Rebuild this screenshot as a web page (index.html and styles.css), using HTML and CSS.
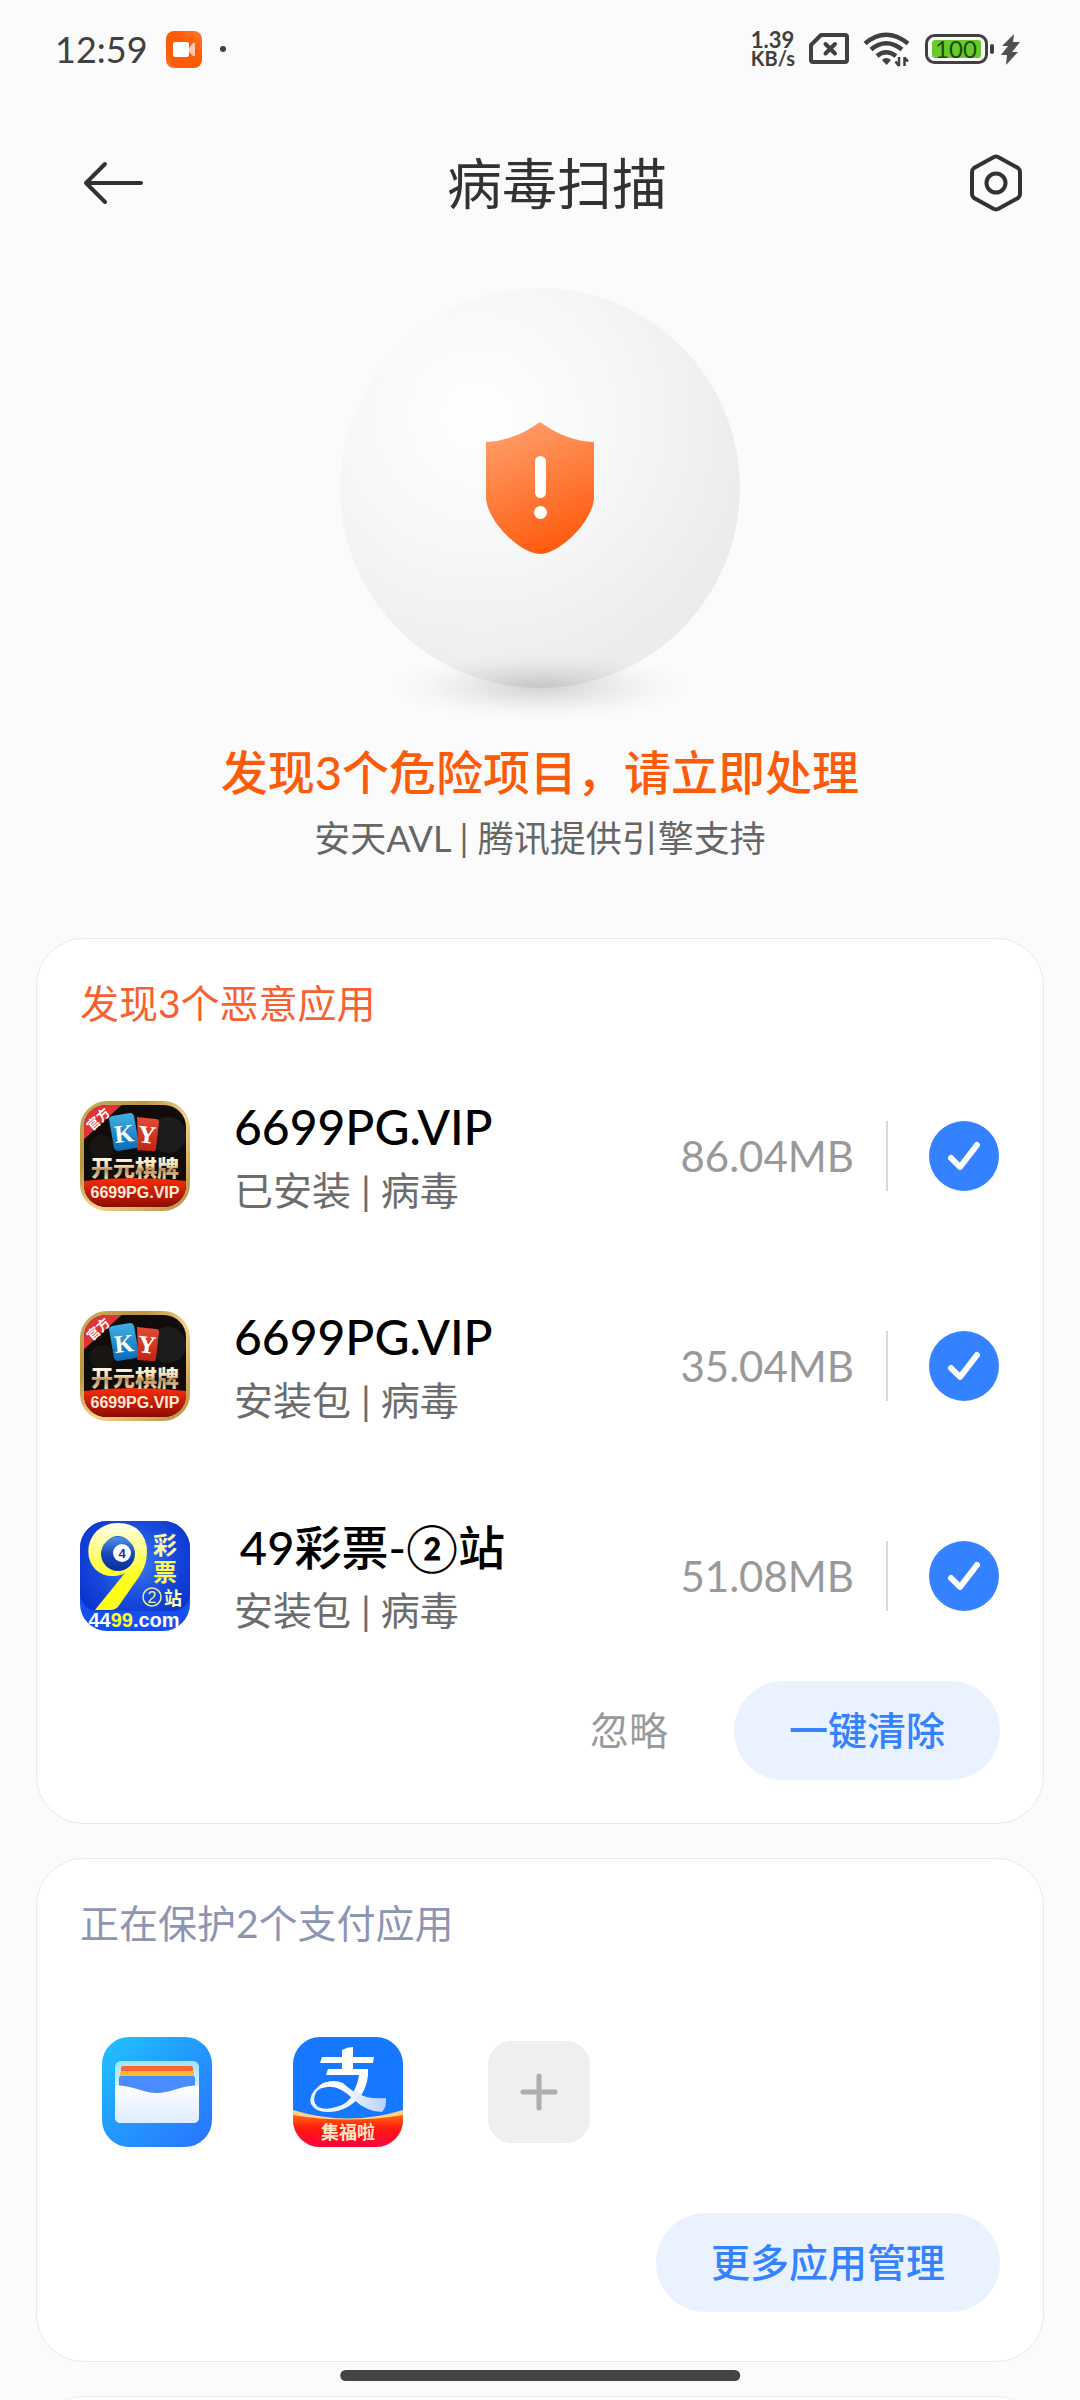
FILE: index.html
```html
<!DOCTYPE html>
<html lang="zh-CN">
<head>
<meta charset="utf-8">
<meta name="viewport" content="width=device-width, initial-scale=1">
<title>病毒扫描</title>
<link rel="stylesheet" href="styles.css">
</head>
<body>
<svg class="defs" width="0" height="0" aria-hidden="true">
  <defs>
    <linearGradient id="gold" x1="0" y1="0" x2="1" y2="1">
      <stop offset="0" stop-color="#c9ac5e"/><stop offset=".3" stop-color="#bd9440"/><stop offset=".55" stop-color="#f3d488"/><stop offset="1" stop-color="#b88a3c"/>
    </linearGradient>
    <linearGradient id="ky-red" x1="0" y1="0" x2="0" y2="1">
      <stop offset="0" stop-color="#fb2c08"/><stop offset="1" stop-color="#8d0d02"/>
    </linearGradient>
    <linearGradient id="ky-blue" x1="0" y1="0" x2="0" y2="1">
      <stop offset="0" stop-color="#3fb0e4"/><stop offset="1" stop-color="#0a6bb8"/>
    </linearGradient>
    <linearGradient id="ky-card" x1="0" y1="0" x2="0" y2="1">
      <stop offset="0" stop-color="#e34a35"/><stop offset="1" stop-color="#c52413"/>
    </linearGradient>
    <linearGradient id="ky-text" x1="0" y1="0" x2="0" y2="1">
      <stop offset=".2" stop-color="#fffdf2"/><stop offset=".5" stop-color="#f2dba6"/><stop offset=".6" stop-color="#b88c55"/><stop offset="1" stop-color="#fff0c8"/>
    </linearGradient>
    <clipPath id="app-clip"><rect width="110" height="110" rx="27"/></clipPath>
    <clipPath id="ky-clip"><rect x="4" y="4" width="102" height="102" rx="22"/></clipPath>
    <symbol id="app-ky" viewBox="0 0 110 110">
      <rect width="110" height="110" rx="27" fill="url(#gold)"/>
      <g clip-path="url(#ky-clip)">
        <rect x="4" y="4" width="102" height="102" fill="#100c0a"/>
        <circle cx="22" cy="46" r="12" fill="#1a1512"/>
        <circle cx="88" cy="34" r="18" fill="#1d1c1c"/>
        <path d="M4 80Q55 74 106 80V106H4z" fill="url(#ky-red)"/>
        <path d="M0 0H46L0 42z" fill="#df3437"/>
        <path d="M32 15L50 12Q53 12 54 15L59 43Q59 46 56 47L38 50Q35 50 34 47L29 18Q29 16 32 15z" fill="url(#ky-blue)"/>
        <path d="M57 16L76 18Q79 18 79 21L76 47Q76 51 72 50L57 49L58 43z" fill="url(#ky-card)"/>
      </g>
      <text class="ky-serif" x="44" y="41" text-anchor="middle" transform="rotate(-6 44 32)">K</text>
      <text class="ky-serif" x="67" y="42" text-anchor="middle" transform="rotate(6 67 32)">Y</text>
      <text class="ky-corner" x="0" y="5" text-anchor="middle" transform="translate(18 18) rotate(-43)">官方</text>
      <text class="ky-name" x="11" y="75" fill="url(#ky-text)">开元棋牌</text>
      <text class="ky-site" x="55" y="97" text-anchor="middle">6699PG.VIP</text>
    </symbol>
  </defs>
</svg>

<div class="screen">
  <header class="status">
    <time class="clock">12:59</time>
    <svg class="rec" width="36" height="37" viewBox="0 0 36 37" aria-hidden="true">
      <defs><linearGradient id="rec" x1="1" y1="0" x2="0" y2="1"><stop offset="0" stop-color="#ff7a33"/><stop offset=".4" stop-color="#ff5a00"/><stop offset=".8" stop-color="#ff5d0a"/><stop offset="1" stop-color="#ff7a3a"/></linearGradient></defs>
      <rect width="36" height="37" rx="8" fill="url(#rec)"/>
      <rect x="7" y="11" width="16" height="15" rx="2" fill="#fff"/>
      <path d="M23 17L27 12H29V25H27L23 21z" fill="#ffc9ad"/>
    </svg>
    <span class="dot"></span>
    <div class="status-right">
      <div class="speed"><span class="rate">1.39</span><span class="unit">KB/s</span></div>
      <svg width="40" height="32" viewBox="0 0 40 32" aria-hidden="true"><path d="M12 2H36Q38 2 38 4V27Q38 29 36 29H4Q2 29 2 27V12z" fill="none" stroke="#404040" stroke-width="4" stroke-linejoin="round"/><path d="M16.500 11L26 20.500M26 11L16.500 20.500" stroke="#404040" stroke-width="4" stroke-linecap="round"/></svg>
      <svg width="48" height="36" viewBox="0 0 48 36" aria-hidden="true">
        <g fill="none" stroke="#404040" stroke-width="4.500"><path d="M2 12.500Q23 -5 45 12.500"/><path d="M8 18.500Q23 6 39 18.500"/><path d="M14 25Q23 17.500 33 25"/></g>
        <path d="M19 29Q23 25 28 29L24 33.500Q23.500 34 23 33.500z" fill="#404040"/>
        <path d="M36 26V35M36 35L32.500 30.500M41.500 35V26M41.500 26.500L45 30.500" stroke="#404040" stroke-width="2.500" fill="none"/>
      </svg>
      <div class="power">
        <svg width="70" height="32" viewBox="0 0 70 32" aria-hidden="true">
          <rect x="1.500" y="2.500" width="60" height="27" rx="8" fill="none" stroke="#404040" stroke-width="3"/>
          <rect x="7" y="7" width="49" height="18" rx="3" fill="#68cb29"/>
          <rect x="65" y="11" width="4" height="10" rx="2" fill="#404040"/>
          <text class="battery" x="31" y="25" text-anchor="middle">100</text>
        </svg>
        <svg width="19" height="31" viewBox="0 0 19 31" aria-hidden="true"><path d="M13 0L1 12H7L0 21H6L5 31L17 18H11L19 8H12z" fill="#505050"/></svg>
      </div>
    </div>
  </header>

  <nav class="bar">
    <button class="icon-btn" aria-label="返回"><svg width="62" height="44" viewBox="0 0 62 44"><path d="M22 3L3 22L22 41M3 22H58" fill="none" stroke="#323232" stroke-width="4" stroke-linecap="round" stroke-linejoin="round"/></svg></button>
    <h1 class="title">病毒扫描</h1>
    <button class="icon-btn" aria-label="设置"><svg width="54" height="58" viewBox="0 0 54 58"><path d="M24.500 3.200Q27 2 29.500 3.200L49 14Q51 15.500 51 18V40Q51 42.500 49 44L29.500 54.800Q27 56 24.500 54.800L5 44Q3 42.500 3 40V18Q3 15.500 5 14z" fill="none" stroke="#323232" stroke-width="4"/><circle cx="27" cy="29" r="9.500" fill="none" stroke="#323232" stroke-width="4"/></svg></button>
  </nav>

  <section class="hero">
    <svg class="ball" viewBox="0 0 440 450" width="440" height="450" aria-hidden="true">
      <defs>
        <radialGradient id="ball" gradientUnits="userSpaceOnUse" cx="158" cy="146" r="275"><stop offset="0" stop-color="#fff"/><stop offset=".5" stop-color="#f6f7f7"/><stop offset="1" stop-color="#ebeded"/></radialGradient>
        <radialGradient id="shade" cx=".5" cy=".5" r=".5"><stop offset="0" stop-color="#000" stop-opacity=".16"/><stop offset=".4" stop-color="#000" stop-opacity=".08"/><stop offset=".75" stop-color="#000" stop-opacity=".02"/><stop offset="1" stop-color="#000" stop-opacity="0"/></radialGradient>
        <linearGradient id="shield" x1=".25" y1="0" x2=".6" y2="1"><stop offset="0" stop-color="#ff9e6b"/><stop offset="1" stop-color="#ff5a0c"/></linearGradient>
      </defs>
      <circle cx="220" cy="218" r="200" fill="url(#ball)"/>
      <ellipse cx="220" cy="417" rx="150" ry="33" fill="url(#shade)"/>
      <path d="M220 152Q246 171 274 172V227C274 250 240 284 220 284C200 284 166 250 166 227V172Q194 171 220 152z" fill="url(#shield)"/>
      <rect x="215" y="186" width="11" height="42" rx="5.500" fill="#fff"/><circle cx="220.500" cy="242.500" r="6.500" fill="#fff"/>
    </svg>
    <h2 class="alert">发现3个危险项目，请立即处理</h2>
    <p class="engine">安天AVL | 腾讯提供引擎支持</p>
  </section>

  <main class="cards">
    <section class="card">
      <h3 class="card-title danger">发现3个恶意应用</h3>
      <ul class="apps">
        <li class="app">
          <svg class="app-icon" width="110" height="110" aria-hidden="true"><use href="#app-ky"/></svg>
          <label class="app-text" for="a1"><span class="app-name">6699PG.VIP</span><span class="app-sub">已安装 | 病毒</span></label>
          <span class="size">86.04MB</span>
          <input class="check" type="checkbox" id="a1" checked>
        </li>
        <li class="app">
          <svg class="app-icon" width="110" height="110" aria-hidden="true"><use href="#app-ky"/></svg>
          <label class="app-text" for="a2"><span class="app-name">6699PG.VIP</span><span class="app-sub">安装包 | 病毒</span></label>
          <span class="size">35.04MB</span>
          <input class="check" type="checkbox" id="a2" checked>
        </li>
        <li class="app">
          <svg class="app-icon" width="110" height="110" viewBox="0 0 110 110" aria-hidden="true">
            <defs>
              <radialGradient id="lot" cx=".5" cy=".55" r=".6"><stop offset="0" stop-color="#3f7cf5"/><stop offset=".6" stop-color="#1748dc"/><stop offset="1" stop-color="#0a33cc"/></radialGradient>
              <linearGradient id="nine" x1="0" y1="0" x2="0" y2="1"><stop offset=".2" stop-color="#fffff0"/><stop offset=".6" stop-color="#ffff1a"/><stop offset="1" stop-color="#ffff10"/></linearGradient>
              <linearGradient id="ball8" x1="0" y1="0" x2="0" y2="1"><stop offset="0" stop-color="#4f93ea"/><stop offset=".5" stop-color="#1747b8"/><stop offset="1" stop-color="#0c2e9a"/></linearGradient>
            </defs>
            <g clip-path="url(#app-clip)">
              <rect width="110" height="110" fill="#1450f0"/>
              <rect y="-20" width="110" height="110" rx="18" fill="url(#lot)"/>
              <text class="nine" x="4" y="89" fill="url(#nine)">9</text>
              <circle cx="38" cy="33" r="17" fill="url(#ball8)"/>
              <circle cx="42" cy="32" r="9" fill="#fff"/>
              <text class="lot-four" x="42" y="37" text-anchor="middle">4</text>
              <text class="lot-char" x="73" y="33" fill="#fffca8">彩</text>
              <text class="lot-char" x="73" y="60" fill="#fff95c">票</text>
              <circle cx="72" cy="76" r="9" fill="none" stroke="#e9ee9a" stroke-width="1.500"/>
              <text class="lot-two" x="72" y="82" text-anchor="middle">2</text>
              <text class="lot-zhan" x="84" y="84">站</text>
              <text class="lot-site" x="54" y="106" text-anchor="middle">44<tspan fill="#ffff20">99</tspan>.com</text>
            </g>
          </svg>
          <label class="app-text" for="a3"><span class="app-name cjk">&#8201;49彩票-②站</span><span class="app-sub">安装包 | 病毒</span></label>
          <span class="size">51.08MB</span>
          <input class="check" type="checkbox" id="a3" checked>
        </li>
      </ul>
      <div class="actions">
        <button class="ghost">忽略</button>
        <button class="pill">一键清除</button>
      </div>
    </section>

    <section class="card">
      <h3 class="card-title">正在保护2个支付应用</h3>
      <div class="pay">
        <svg width="110" height="110" viewBox="0 0 110 110" role="img" aria-label="钱包">
          <defs>
            <linearGradient id="wal" x1="0" y1="0" x2="1" y2="1"><stop offset="0" stop-color="#1fc4ff"/><stop offset=".5" stop-color="#2398ff"/><stop offset="1" stop-color="#2a72ff"/></linearGradient>
            <linearGradient id="pocket" x1="0" y1="0" x2="0" y2="1"><stop offset="0" stop-color="#fff"/><stop offset="1" stop-color="#dfedff"/></linearGradient>
            <linearGradient id="back" x1="0" y1="0" x2="0" y2="1"><stop offset="0" stop-color="#9be3ff"/><stop offset=".4" stop-color="#d3f3ff"/></linearGradient>
          </defs>
          <rect width="110" height="110" rx="27" fill="url(#wal)"/>
          <rect x="13" y="24" width="84" height="62" rx="6" fill="url(#back)"/>
          <rect x="19" y="29" width="72" height="12" rx="2" fill="#fb6330"/>
          <rect x="18" y="34" width="74" height="12" rx="2" fill="#fcb834"/>
          <rect x="17" y="39" width="76" height="22" rx="2" fill="#4a8bff"/>
          <path d="M13 49L18 48.500C34 50 42 56 55 56C68 56 76 50 92 48.500L97 49V80Q97 86 91 86H19Q13 86 13 80z" fill="url(#pocket)"/>
        </svg>
        <svg width="110" height="110" viewBox="0 0 110 110" role="img" aria-label="支付宝">
          <defs>
            <linearGradient id="tail" x1="0" y1="0" x2="1" y2="0"><stop offset=".3" stop-color="#fff"/><stop offset="1" stop-color="#b5d0ff"/></linearGradient>
            <linearGradient id="fu" x1="0" y1="0" x2="0" y2="1"><stop offset="0" stop-color="#ff6a10"/><stop offset=".4" stop-color="#ff1c0c"/><stop offset="1" stop-color="#ff0040"/></linearGradient>
          </defs>
          <g clip-path="url(#app-clip)">
            <rect width="110" height="110" fill="#1677ff"/>
            <path d="M49 13Q54 10 60 10V20H81L80 26H60V32H75Q76 45 69 57L60 56Q65 46 66 38H33L35 32H49V26H27L29 20H49z" fill="#fff"/>
            <path d="M64 52Q55 68 43 70Q30 74 24 69Q18 63 24 54Q30 47 41 47Q49 48 61 56L50 46Q38 41 26 49Q15 58 18 67Q23 76 37 75Q56 74 69 57z" fill="#eef5ff"/>
            <path d="M34 45Q46 43 60 54Q74 63 93 61Q94 70 89 75Q74 75 60 62Q46 48 34 50Q26 51 24 54Q26 46 34 45z" fill="url(#tail)"/>
            <path d="M0 73Q55 90 110 73V110H0z" fill="#ffd08a"/>
            <path d="M0 78Q55 87 110 78V110H0z" fill="url(#fu)"/>
            <text class="fu" x="55" y="102" text-anchor="middle">集福啦</text>
          </g>
        </svg>
        <button class="add" aria-label="添加"><svg width="38" height="38" viewBox="0 0 38 38"><path d="M19 3V35M3 19H35" stroke="#aeaeae" stroke-width="5" stroke-linecap="round"/></svg></button>
      </div>
      <div class="actions"><button class="pill">更多应用管理</button></div>
    </section>
    <section class="card next"></section>
  </main>
  <div class="home"></div>
</div>
</body>
</html>
```
FILE: styles.css
```css
* { box-sizing: border-box; margin: 0; padding: 0; }
body { background: #fbfbfb; font-family: Lato, "Noto Sans CJK SC", sans-serif; color: #000; }
button { border: 0; background: none; font: inherit; cursor: pointer; }
svg { display: block; flex: none; }
.defs { position: absolute; }

.screen { position: relative; height: 100vh; overflow: hidden; display: flex; flex-direction: column; }

/* status bar */
.status { display: flex; align-items: center; height: 98px; padding: 0 60px 0 55px; color: #404040; flex: none; }
.clock { font-size: 36px; line-height: 40px; }
.rec { margin-left: 18px; }
.dot { width: 6px; height: 6px; margin-left: 18px; border-radius: 50%; background: #404040; }
.status-right { display: flex; align-items: center; gap: 14px; margin-left: auto; }
.power { display: flex; align-items: center; gap: 6px; }
.speed { display: flex; flex-direction: column; font-weight: 700; }
.rate { font-size: 22px; line-height: 18px; }
.unit { font-size: 20px; line-height: 18px; }
.battery { font-size: 24px; fill: #1c4a08; }

/* title bar */
.bar { display: flex; align-items: center; justify-content: space-between; height: 170px; padding: 0 57px 0 83px; flex: none; }
.title { font-size: 55px; line-height: 64px; font-weight: 400; color: #323232; }

/* scan result */
.hero { display: flex; flex-direction: column; align-items: center; text-align: center; padding-top: 2px; flex: none; }
.alert { margin-top: 22px; font-size: 47px; line-height: 60px; font-weight: 500; color: #fc5b0a; }
.engine { margin-top: 8px; font-size: 36px; line-height: 56px; color: #666; }

/* cards */
.cards { display: flex; flex-direction: column; gap: 34px; padding: 72px 36px 0; }
.card { padding: 36px 43px 43px; border: 1px solid #e9e9e9; border-radius: 48px; background: #fff; flex: none; }
.card-title { font-size: 39px; line-height: 56px; font-weight: 400; color: #8d95b3; }
.danger { color: #f9602f; }
.apps { list-style: none; padding-top: 20px; }
.app { display: flex; align-items: center; height: 210px; }
.app-text { display: flex; flex-direction: column; flex: 1; padding: 4px 0 0 44px; }
.app-name { font-size: 48px; line-height: 62px; font-weight: 500; }
.cjk { font-size: 47px; }
.app-sub { font-size: 39px; line-height: 60px; margin-top: 2px; color: #6c6c6c; }
.size { padding-right: 32px; font-size: 42px; line-height: 70px; color: #999; border-right: 2px solid #d9d9d9; }
.check { appearance: none; width: 70px; height: 70px; margin: 0 1px 0 41px; border-radius: 50%; background: #ddd; flex: none; }
.check:checked { background: #3482ff url("data:image/svg+xml,%3Csvg xmlns='http://www.w3.org/2000/svg' viewBox='0 0 70 70'%3E%3Cpath d='M22 37L31 46L48 24' fill='none' stroke='white' stroke-width='6' stroke-linecap='round' stroke-linejoin='round'/%3E%3C/svg%3E") center / 100%; }
.actions { display: flex; justify-content: flex-end; align-items: center; gap: 66px; }
.ghost { font-size: 39px; line-height: 99px; color: #999; }
.pill { padding: 0 55px; font-size: 39px; line-height: 99px; font-weight: 500; color: #3482ff; background: #eaf1ff; border-radius: 50px; }
.pay { display: flex; align-items: center; gap: 81px; padding: 86px 0 66px 22px; }
.pay + .actions { padding-bottom: 6px; }
.add { display: grid; place-items: center; width: 102px; height: 102px; margin-left: 4px; border-radius: 24px; background: #efefef; }
.next { min-height: 200px; }

.home { position: absolute; bottom: 19px; left: 50%; width: 37%; height: 11px; transform: translateX(-50%); border-radius: 6px; background: #444; }

/* lettering inside app icons */
.ky-serif { font: 700 25px "Liberation Serif", serif; fill: #fff; }
.ky-corner { font: 700 13px "Noto Sans CJK SC", sans-serif; fill: #fff; }
.ky-name { font: 900 22px "Noto Sans CJK SC", sans-serif; }
.ky-site { font: 700 16px "Liberation Sans", sans-serif; fill: #ffe8d8; }
.nine { font: 900 118px Lato, sans-serif; }
.lot-four { font: 700 13px "Liberation Sans", sans-serif; fill: #1438a0; }
.lot-char { font: 700 24px "Noto Sans CJK SC", sans-serif; }
.lot-two { font: 400 16px "Liberation Sans", sans-serif; fill: #e9ee9a; }
.lot-zhan { font: 700 18px "Noto Sans CJK SC", sans-serif; fill: #fffcb0; }
.lot-site { font: 700 20px "Liberation Sans", sans-serif; fill: #fff; }
.fu { font: 700 18px "Noto Sans CJK SC", sans-serif; fill: #ffe9c4; }
```
